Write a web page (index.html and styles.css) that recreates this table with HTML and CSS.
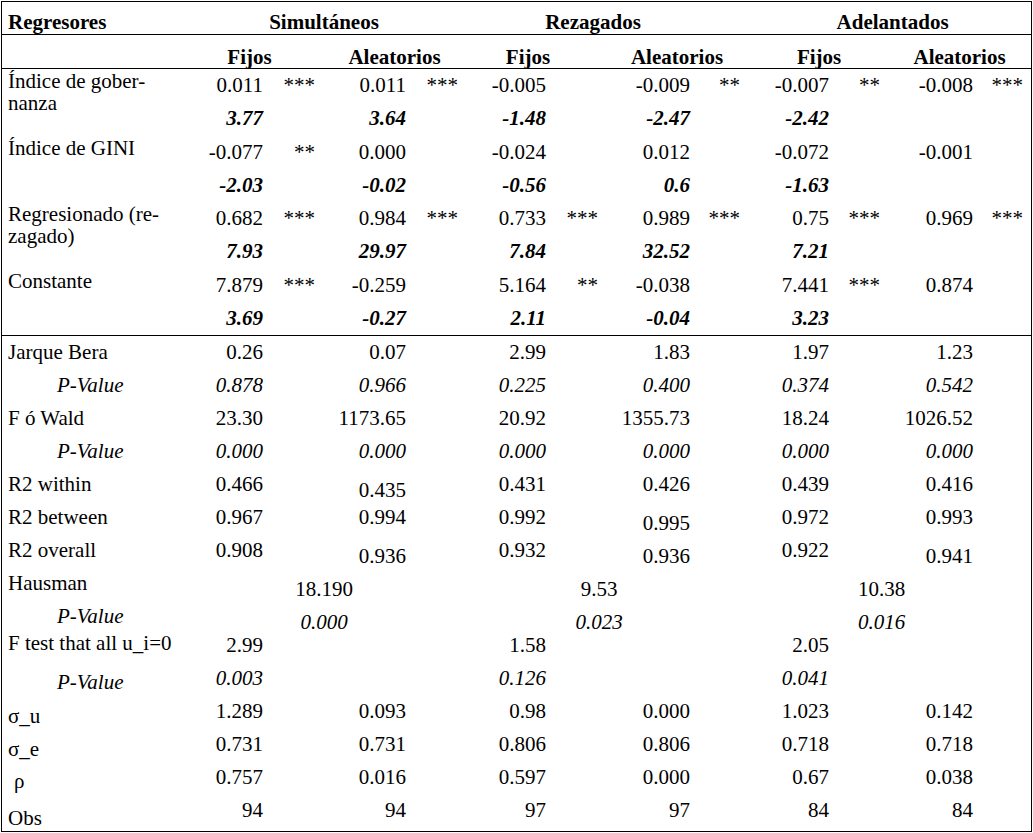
FILE: index.html
```html
<!DOCTYPE html>
<html lang="es">
<head>
<meta charset="utf-8">
<title>Regresores</title>
<link rel="stylesheet" href="styles.css">
</head>
<body>
<table class="tbl">
<colgroup>
<col class="c0"><col class="c1"><col class="c2"><col class="c3"><col class="c4"><col class="c5"><col class="c6"><col class="c7"><col class="c8"><col class="c9"><col class="c10"><col class="c11"><col class="c12"><col class="c13">
</colgroup>
<thead>
<tr class="h1">
<th class="lbl">Regresores</th>
<th colspan="4" class="grp">Simultáneos</th>
<th colspan="4" class="grp rez">Rezagados</th>
<th colspan="5" class="grp adel">Adelantados</th>
</tr>
<tr class="h2">
<th></th>
<th colspan="2" class="fj fj-s">Fijos</th>
<th colspan="2" class="al">Aleatorios</th>
<th colspan="2" class="fj fj-r">Fijos</th>
<th colspan="2" class="al">Aleatorios</th>
<th colspan="2" class="fj fj-a">Fijos</th>
<th colspan="2" class="al">Aleatorios</th>
<th></th>
</tr>
</thead>
<tbody class="reg">
<tr class="r33">
<td class="lbl" rowspan="2">Índice de gober-<br>nanza</td>
<td class="n">0.011</td><td class="s">***</td>
<td class="n">0.011</td><td class="s">***</td>
<td class="n">-0.005</td><td class="s"></td>
<td class="n">-0.009</td><td class="s">**</td>
<td class="n">-0.007</td><td class="s">**</td>
<td class="n">-0.008</td><td class="s">***</td>
<td></td>
</tr>
<tr class="r34">
<td class="n t">3.77</td><td></td>
<td class="n t">3.64</td><td></td>
<td class="n t">-1.48</td><td></td>
<td class="n t">-2.47</td><td></td>
<td class="n t">-2.42</td><td></td>
<td></td><td></td><td></td>
</tr>
<tr class="r33">
<td class="lbl" rowspan="2">Índice de GINI</td>
<td class="n">-0.077</td><td class="s">**</td>
<td class="n">0.000</td><td class="s"></td>
<td class="n">-0.024</td><td class="s"></td>
<td class="n">0.012</td><td class="s"></td>
<td class="n">-0.072</td><td class="s"></td>
<td class="n">-0.001</td><td class="s"></td>
<td></td>
</tr>
<tr class="r33">
<td class="n t">-2.03</td><td></td>
<td class="n t">-0.02</td><td></td>
<td class="n t">-0.56</td><td></td>
<td class="n t">0.6</td><td></td>
<td class="n t">-1.63</td><td></td>
<td></td><td></td><td></td>
</tr>
<tr class="r33">
<td class="lbl" rowspan="2">Regresionado (re-<br>zagado)</td>
<td class="n">0.682</td><td class="s">***</td>
<td class="n">0.984</td><td class="s">***</td>
<td class="n">0.733</td><td class="s">***</td>
<td class="n">0.989</td><td class="s">***</td>
<td class="n">0.75</td><td class="s">***</td>
<td class="n">0.969</td><td class="s">***</td>
<td></td>
</tr>
<tr class="r34">
<td class="n t">7.93</td><td></td>
<td class="n t">29.97</td><td></td>
<td class="n t">7.84</td><td></td>
<td class="n t">32.52</td><td></td>
<td class="n t">7.21</td><td></td>
<td></td><td></td><td></td>
</tr>
<tr class="r33">
<td class="lbl ruled" rowspan="2">Constante</td>
<td class="n">7.879</td><td class="s">***</td>
<td class="n">-0.259</td><td class="s"></td>
<td class="n">5.164</td><td class="s">**</td>
<td class="n">-0.038</td><td class="s"></td>
<td class="n">7.441</td><td class="s">***</td>
<td class="n">0.874</td><td class="s"></td>
<td></td>
</tr>
<tr class="r34 last">
<td class="n t">3.69</td><td></td>
<td class="n t">-0.27</td><td></td>
<td class="n t">2.11</td><td></td>
<td class="n t">-0.04</td><td></td>
<td class="n t">3.23</td><td></td>
<td></td><td></td><td></td>
</tr>
</tbody>
<tbody class="stats">
<tr>
<td class="lbl">Jarque Bera</td>
<td class="n">0.26</td><td></td>
<td class="n">0.07</td><td></td>
<td class="n">2.99</td><td></td>
<td class="n">1.83</td><td></td>
<td class="n">1.97</td><td></td>
<td class="n">1.23</td><td></td>
<td></td>
</tr>
<tr>
<td class="lbl pv">P-Value</td>
<td class="n p">0.878</td><td></td>
<td class="n p">0.966</td><td></td>
<td class="n p">0.225</td><td></td>
<td class="n p">0.400</td><td></td>
<td class="n p">0.374</td><td></td>
<td class="n p">0.542</td><td></td>
<td></td>
</tr>
<tr>
<td class="lbl">F ó Wald</td>
<td class="n">23.30</td><td></td>
<td class="n">1173.65</td><td></td>
<td class="n">20.92</td><td></td>
<td class="n">1355.73</td><td></td>
<td class="n">18.24</td><td></td>
<td class="n">1026.52</td><td></td>
<td></td>
</tr>
<tr>
<td class="lbl pv">P-Value</td>
<td class="n p">0.000</td><td></td>
<td class="n p">0.000</td><td></td>
<td class="n p">0.000</td><td></td>
<td class="n p">0.000</td><td></td>
<td class="n p">0.000</td><td></td>
<td class="n p">0.000</td><td></td>
<td></td>
</tr>
<tr>
<td class="lbl">R2 within</td>
<td class="n">0.466</td><td></td>
<td class="n dn">0.435</td><td></td>
<td class="n">0.431</td><td></td>
<td class="n">0.426</td><td></td>
<td class="n">0.439</td><td></td>
<td class="n">0.416</td><td></td>
<td></td>
</tr>
<tr>
<td class="lbl">R2 between</td>
<td class="n">0.967</td><td></td>
<td class="n">0.994</td><td></td>
<td class="n">0.992</td><td></td>
<td class="n dn">0.995</td><td></td>
<td class="n">0.972</td><td></td>
<td class="n">0.993</td><td></td>
<td></td>
</tr>
<tr>
<td class="lbl">R2 overall</td>
<td class="n">0.908</td><td></td>
<td class="n dn">0.936</td><td></td>
<td class="n">0.932</td><td></td>
<td class="n dn">0.936</td><td></td>
<td class="n">0.922</td><td></td>
<td class="n dn">0.941</td><td></td>
<td></td>
</tr>
<tr>
<td class="lbl">Hausman</td>
<td colspan="4" class="c dn">18.190</td>
<td colspan="4" class="c dn">9.53</td>
<td colspan="4" class="c dn">10.38</td>
<td></td>
</tr>
<tr>
<td class="lbl pv">P-Value</td>
<td colspan="4" class="c p dn">0.000</td>
<td colspan="4" class="c p dn">0.023</td>
<td colspan="4" class="c p dn">0.016</td>
<td></td>
</tr>
<tr>
<td class="lbl hi">F test that all u_i=0</td>
<td class="n up">2.99</td><td></td>
<td></td><td></td>
<td class="n up">1.58</td><td></td>
<td></td><td></td>
<td class="n up">2.05</td><td></td>
<td></td><td></td>
<td></td>
</tr>
<tr>
<td class="lbl pv">P-Value</td>
<td class="n p up">0.003</td><td></td>
<td></td><td></td>
<td class="n p up">0.126</td><td></td>
<td></td><td></td>
<td class="n p up">0.041</td><td></td>
<td></td><td></td>
<td></td>
</tr>
<tr>
<td class="lbl dn1">σ_u</td>
<td class="n up">1.289</td><td></td>
<td class="n up">0.093</td><td></td>
<td class="n up">0.98</td><td></td>
<td class="n up">0.000</td><td></td>
<td class="n up">1.023</td><td></td>
<td class="n up">0.142</td><td></td>
<td></td>
</tr>
<tr>
<td class="lbl dn1">σ_e</td>
<td class="n up">0.731</td><td></td>
<td class="n up">0.731</td><td></td>
<td class="n up">0.806</td><td></td>
<td class="n up">0.806</td><td></td>
<td class="n up">0.718</td><td></td>
<td class="n up">0.718</td><td></td>
<td></td>
</tr>
<tr>
<td class="lbl rho">ρ</td>
<td class="n up">0.757</td><td></td>
<td class="n up">0.016</td><td></td>
<td class="n up">0.597</td><td></td>
<td class="n up">0.000</td><td></td>
<td class="n up">0.67</td><td></td>
<td class="n up">0.038</td><td></td>
<td></td>
</tr>
<tr>
<td class="lbl lo">Obs</td>
<td class="n up">94</td><td></td>
<td class="n up">94</td><td></td>
<td class="n up">97</td><td></td>
<td class="n up">97</td><td></td>
<td class="n up">84</td><td></td>
<td class="n up">84</td><td></td>
<td></td>
</tr>
</tbody>
</table>
</body>
</html>
```

FILE: styles.css
```css
html, body {
  margin: 0;
  padding: 0;
  background: #fff;
}

body {
  font-family: "Liberation Serif", "Times New Roman", serif;
  font-size: 21px;
  color: #000;
}

.tbl {
  margin: 1px 0 0 1px;
  width: 1031px;
  border: 1px solid #000;
  border-collapse: separate;
  border-spacing: 0;
  table-layout: fixed;
}

.c0 { width: 188px; }
.c1 { width: 73px; }
.c2 { width: 52px; }
.c3 { width: 91px; }
.c4 { width: 52px; }
.c5 { width: 88px; }
.c6 { width: 52px; }
.c7 { width: 92px; }
.c8 { width: 50px; }
.c9 { width: 89px; }
.c10 { width: 51px; }
.c11 { width: 93px; }
.c12 { width: 50px; }
.c13 { width: 8px; }

.tbl th,
.tbl td {
  padding: 6px 0 0 0;
  vertical-align: top;
  line-height: 20px;
  white-space: nowrap;
  font-weight: normal;
  text-align: left;
}

/* header rows */
.h1 { height: 33px; }
.h2 { height: 34px; }

.tbl .h1 th,
.tbl .h2 th {
  font-weight: bold;
  border-bottom: 1px solid #000;
}

.tbl .h1 th { padding-top: 10px; }
.tbl .h2 th { padding-top: 12px; }

.tbl .h1 th.grp { text-align: center; }
.tbl .h1 th.rez { padding-right: 12px; }
.tbl .h1 th.adel { padding-left: 14px; }

.tbl .h2 th.fj,
.tbl .h2 th.al { text-align: center; }
.tbl .h2 th.al { padding-left: 16px; }
.tbl .h2 th.fj-s { padding-right: 6px; }
.tbl .h2 th.fj-a { padding-left: 18px; }

/* regression block */
.r33 { height: 33px; }
.r34 { height: 34px; }

.tbl .reg td.lbl {
  padding-top: 1px;
  line-height: 22px;
  white-space: normal;
}

.tbl .last td,
.tbl .reg td.ruled { border-bottom: 1px solid #000; }

/* stats block */
.stats tr { height: 33px; }

/* cell kinds */
.tbl .lbl { padding-left: 6px; }
.tbl .pv {
  padding-left: 55px;
  font-style: italic;
}
.tbl .rho { padding-left: 12px; }

.tbl .n,
.tbl .s { text-align: right; }
.tbl .c { text-align: center; }
.tbl .t {
  font-weight: bold;
  font-style: italic;
}
.tbl .p { font-style: italic; }

/* small vertical offsets, as in the source document */
.tbl .dn { padding-top: 12px; }
.tbl .up { padding-top: 2px; }
.tbl .hi { padding-top: 0; }
.tbl .dn1 { padding-top: 7px; }
.tbl .lo { padding-top: 10px; }
```
